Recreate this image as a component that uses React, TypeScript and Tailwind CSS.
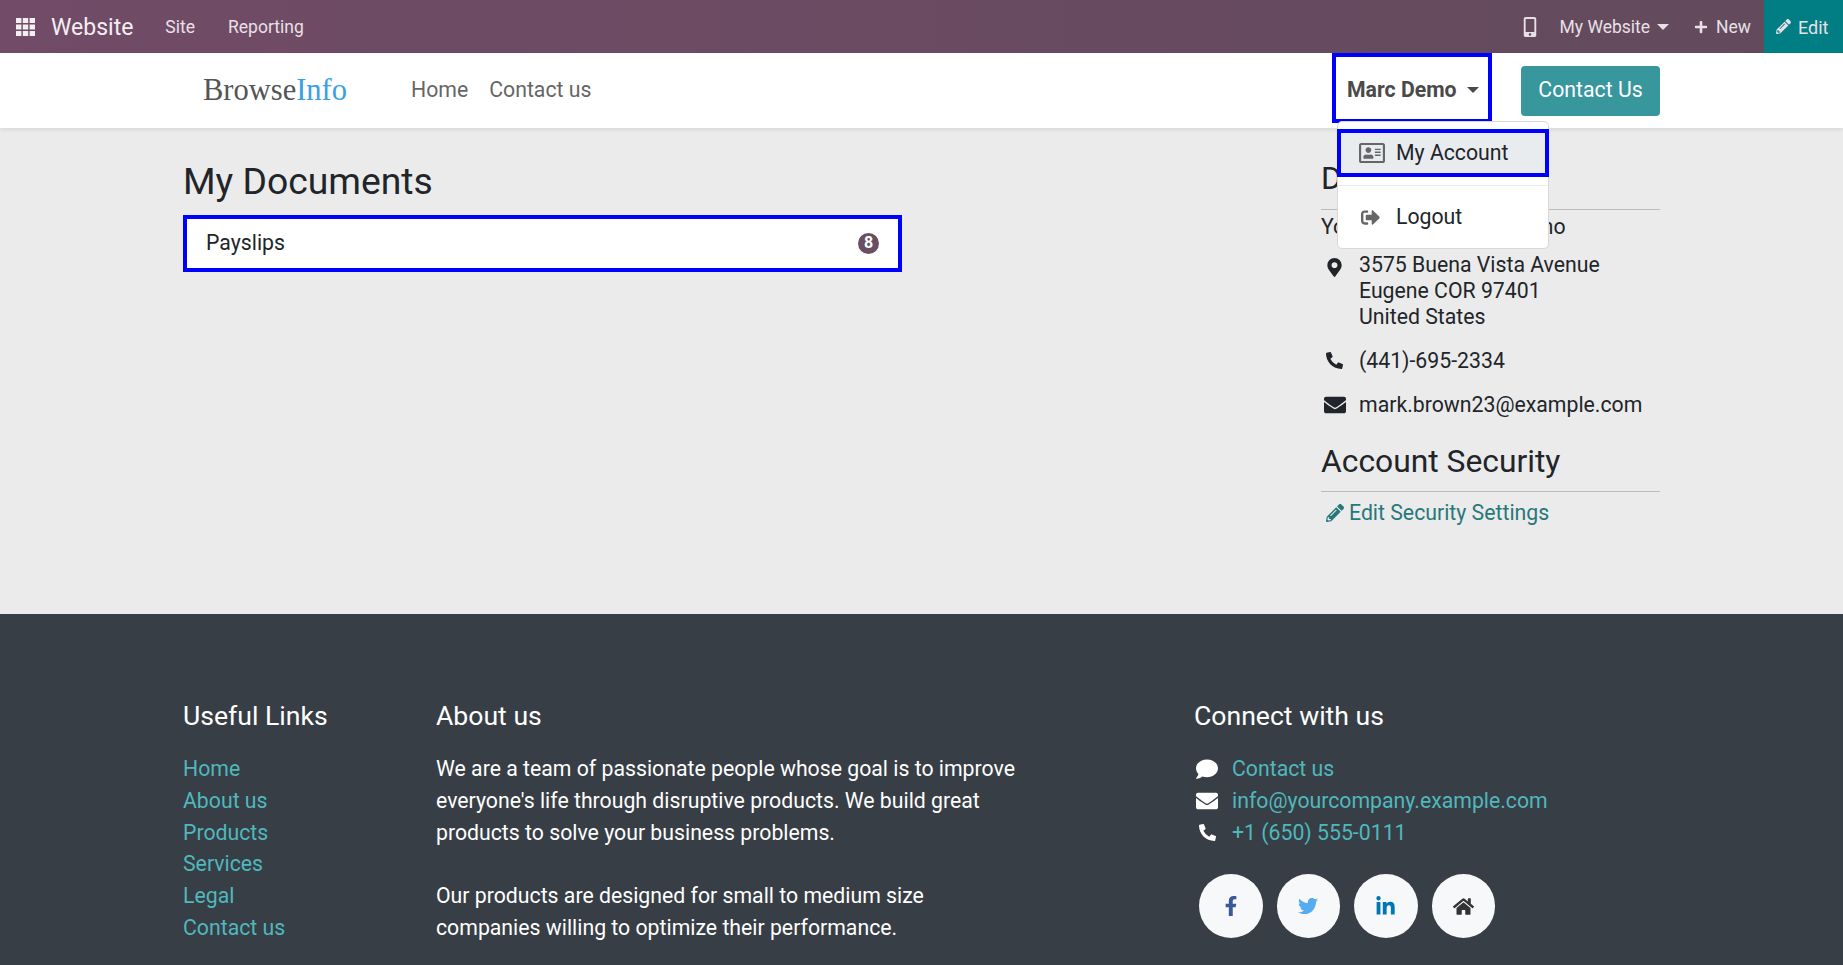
import {
  FaMobileAlt,
  FaPlus,
  FaPencilAlt,
  FaMapMarkerAlt,
  FaPhoneAlt,
  FaEnvelope,
  FaRegAddressCard,
  FaSignOutAlt,
  FaComment,
  FaFacebookF,
  FaTwitter,
  FaLinkedinIn,
  FaHome,
} from "react-icons/fa";

const usefulLinks = ["Home", "About us", "Products", "Services", "Legal", "Contact us"];

function Caret({ className }: { className: string }) {
  return <span className={`inline-block w-0 h-0 border-x-[6px] border-x-transparent border-t-[6px] ${className}`} />;
}

function AppsIcon() {
  return (
    <svg viewBox="0 0 19 18" className="ml-[16px] w-[19px] h-[18px] fill-[#f3eef2]">
      <rect x="0" y="0" width="5.4" height="5" />
      <rect x="6.8" y="0" width="5.4" height="5" />
      <rect x="13.6" y="0" width="5.4" height="5" />
      <rect x="0" y="6.5" width="5.4" height="5" />
      <rect x="6.8" y="6.5" width="5.4" height="5" />
      <rect x="13.6" y="6.5" width="5.4" height="5" />
      <rect x="0" y="13" width="5.4" height="5" />
      <rect x="6.8" y="13" width="5.4" height="5" />
      <rect x="13.6" y="13" width="5.4" height="5" />
    </svg>
  );
}

function TopBar() {
  return (
    <div className="h-[53px] flex items-center text-white bg-gradient-to-r from-[#714b67] to-[#624a5c]">
      <AppsIcon />
      <span className="ml-[16px] pt-[3px] text-[23px] text-[#f3eef2]">Website</span>
      <span className="ml-[32px] pt-[2px] text-[17.5px] text-[#e8e0e6]">Site</span>
      <span className="ml-[33px] pt-[2px] text-[17.5px] text-[#e8e0e6]">Reporting</span>
      <div className="ml-auto flex items-center h-full pt-0 text-[17.5px] text-[#e8e0e6]">
        <FaMobileAlt className="w-[14px] h-[20px]" />
        <span className="ml-[23px] pt-[2px]">My Website</span>
        <Caret className="ml-[7px] border-t-[#e8e0e6]" />
        <FaPlus className="ml-[25px] w-[14px] h-[14px]" />
        <span className="ml-[8px] pt-[2px]">New</span>
        <div className="ml-[13px] h-full w-[79px] flex items-center pl-[12px] gap-[7px] bg-[#017e84]">
          <FaPencilAlt className="w-[15px] h-[15px]" />
          <span className="pt-[2px] text-[18px]">Edit</span>
        </div>
      </div>
    </div>
  );
}

function NavBar() {
  return (
    <div className="relative z-10 h-[75px] bg-white shadow-[0_2px_4px_rgba(0,0,0,0.08)] flex items-center pl-[203px] pr-[183px]">
      <span className="font-['Liberation_Serif',serif] text-[30.5px] text-[#555555]">
        Browse<span className="text-[#3aa0e6]">Info</span>
      </span>
      <span className="pb-[2px] ml-[64px] text-[21.25px] text-[#666666]">Home</span>
      <span className="pb-[2px] ml-[21px] text-[21.25px] text-[#666666]">Contact us</span>
      <div className="ml-auto h-[70px] -mt-[5px] w-[160px] border-[4px] border-[#0000ff] flex items-center pl-[11px] pt-[3px] font-bold text-[21.25px] text-[#4a4a4a]">
        Marc Demo
        <Caret className="ml-[10px] border-t-[#4a4a4a]" />
      </div>
      <div className="ml-[29px] pb-[2px] h-[50px] w-[139px] rounded-[4px] bg-[#38969d] text-[21.25px] text-white flex items-center justify-center">
        Contact Us
      </div>
      <div className="absolute left-[1337px] top-[68px] w-[212px] h-[128px] bg-white border border-[#d8d8d8] rounded-[5px]">
        <div className="mt-[7px] -ml-px h-[48px] w-[212px] bg-[#e9ecef] border-[4px] border-[#0000ff] flex items-center pl-[18px] text-[21.25px] text-[#212529]">
          <FaRegAddressCard className="w-[26px] h-[26px] text-[#666666]" />
          <span className="ml-[11px]">My Account</span>
        </div>
        <div className="mt-[8px] border-t border-[#e9ecef]" />
        <div className="mt-[7px] h-[48px] flex items-center pl-[23px] text-[21.25px] text-[#212529]">
          <FaSignOutAlt className="w-[19px] h-[19px] text-[#666666]" />
          <span className="ml-[16px]">Logout</span>
        </div>
      </div>
    </div>
  );
}

function DetailRow({ icon, children }: { icon: React.ReactNode; children: React.ReactNode }) {
  return (
    <div className="flex leading-[26px]">
      <div className="w-[27px] mr-[11px] h-[26px] flex items-center justify-center shrink-0 text-[#212529]">{icon}</div>
      <div>{children}</div>
    </div>
  );
}

function Main() {
  return (
    <div className="h-[486px] bg-[#ebebeb] pl-[183px] pr-[183px] flex justify-between text-[#212529]">
      <div className="w-[719px] pt-[22px]">
        <h3 className="text-[37.3px] leading-[62px] h-[62px]">My Documents</h3>
        <div className="mt-[3px] pb-[1px] h-[57px] bg-white border-[4px] border-[#0000ff] flex items-center justify-between pl-[19px] pr-[19px] text-[21.25px] text-[#212529]">
          Payslips
          <span className="w-[21px] h-[21px] rounded-full bg-[#6a4f63] text-white text-[16px] font-bold flex items-center justify-center">8</span>
        </div>
      </div>
      <div className="w-[339px] pt-[26px] text-[21.25px]">
        <h4 className="text-[31.8px] leading-[48px] pb-[6.5px] border-b border-[#bbbbbb]">Details</h4>
        <div className="mt-[2px] leading-[30px]">Your account: Marc Demo</div>
        <div className="mt-[10px] flex flex-col gap-[18px]">
          <DetailRow icon={<FaMapMarkerAlt className="mt-[5px] w-[15px] h-[19px]" />}>
            3575 Buena Vista Avenue
            <br />
            Eugene COR 97401
            <br />
            United States
          </DetailRow>
          <DetailRow icon={<FaPhoneAlt className="w-[17px] h-[17px]" />}>(441)-695-2334</DetailRow>
          <DetailRow icon={<FaEnvelope className="w-[22px] h-[22px]" />}>mark.brown23@example.com</DetailRow>
        </div>
        <h4 className="mt-[19px] text-[31.8px] leading-[48px] pb-[6px] border-b border-[#bbbbbb]">Account Security</h4>
        <div className="mt-[6px] flex items-center text-[#27787a] leading-[30px]">
          <FaPencilAlt className="ml-[5px] w-[18px] h-[18px]" />
          <span className="ml-[5px]">Edit Security Settings</span>
        </div>
      </div>
    </div>
  );
}

function SocialCircle({ className, children }: { className: string; children: React.ReactNode }) {
  return (
    <div className={`w-[63.5px] h-[64px] rounded-full bg-[#f6f8fa] flex items-center justify-center ${className}`}>
      {children}
    </div>
  );
}

function Footer() {
  return (
    <div className="flex-1 bg-[#383e45] pl-[183px] pt-[84px] flex text-[21.25px] leading-[31.8px] text-white">
      <div className="w-[253px]">
        <h5 className="text-[26.6px] leading-[36px] mb-[19px]">Useful Links</h5>
        {usefulLinks.map((link) => (
          <div key={link} className="text-[#4fb8bd]">{link}</div>
        ))}
      </div>
      <div className="w-[758px]">
        <h5 className="text-[26.6px] leading-[36px] mb-[19px]">About us</h5>
        <p className="w-[590px]">
          We are a team of passionate people whose goal is to improve everyone's life through disruptive products. We build great products to solve your business problems.
        </p>
        <p className="w-[590px] mt-[31.8px]">
          Our products are designed for small to medium size companies willing to optimize their performance.
        </p>
      </div>
      <div>
        <h5 className="text-[26.6px] leading-[36px] mb-[19px]">Connect with us</h5>
        <div className="flex items-center">
          <FaComment className="ml-[2px] w-[22px] h-[22px]" />
          <span className="ml-[14px] text-[#4fb8bd]">Contact us</span>
        </div>
        <div className="flex items-center">
          <FaEnvelope className="ml-[2px] w-[22px] h-[22px]" />
          <span className="ml-[14px] text-[#4fb8bd]">info@yourcompany.example.com</span>
        </div>
        <div className="flex items-center">
          <FaPhoneAlt className="ml-[5px] w-[17px] h-[17px]" />
          <span className="ml-[16px] text-[#4fb8bd]">+1 (650) 555-0111</span>
        </div>
        <div className="mt-[26px] ml-[5px] flex gap-[14px]">
          <SocialCircle className="text-[#3b5998]">
            <FaFacebookF className="w-[20px] h-[20px]" />
          </SocialCircle>
          <SocialCircle className="text-[#55acee]">
            <FaTwitter className="w-[20px] h-[20px]" />
          </SocialCircle>
          <SocialCircle className="text-[#0077b5]">
            <FaLinkedinIn className="w-[21px] h-[21px]" />
          </SocialCircle>
          <SocialCircle className="text-[#333333]">
            <FaHome className="w-[21px] h-[21px]" />
          </SocialCircle>
        </div>
      </div>
    </div>
  );
}

export default function App() {
  return (
    <div className="h-[965px] overflow-hidden flex flex-col font-['Roboto',sans-serif]">
      <TopBar />
      <NavBar />
      <Main />
      <Footer />
    </div>
  );
}
